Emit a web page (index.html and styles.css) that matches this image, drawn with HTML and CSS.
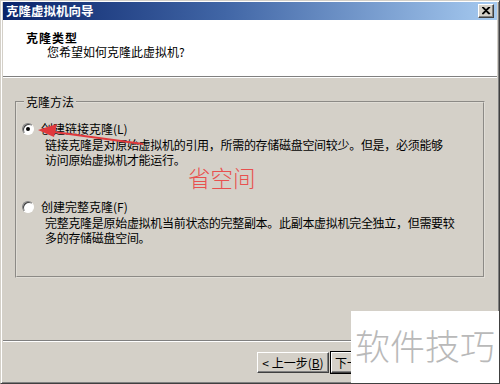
FILE: index.html
```html
<!doctype html>
<html lang="zh-CN">
  <head>
    <meta charset="UTF-8" />
    <title>克隆虚拟机向导</title>
    <link rel="stylesheet" href="styles.css">
  </head>
  <body>
    <div class="window">
      <div class="titlebar">
        <span class="title">克隆虚拟机向导</span>
        <span class="close-btn">
          <svg width="9" height="8" viewBox="0 0 9 8">
            <path d="M1 0 L8 7 M0 0 L7 7 M8 0 L1 7 M7 0 L0 7" stroke="#000" stroke-width="1.2" />
          </svg>
        </span>
      </div>
      <div class="header">
        <div class="header-title">克隆类型</div>
        <div class="header-sub">您希望如何克隆此虚拟机?</div>
      </div>
      <div class="content">
        <fieldset class="group">
          <legend>克隆方法</legend>
          <div class="option">
            <div class="option-label"><span class="radio checked"></span>创建链接克隆(L)</div>
            <div class="option-desc">链接克隆是对原始虚拟机的引用，所需的存储磁盘空间较少。但是，必须能够<br>访问原始虚拟机才能运行。</div>
          </div>
          <div class="option second">
            <div class="option-label"><span class="radio"></span>创建完整克隆(F)</div>
            <div class="option-desc">完整克隆是原始虚拟机当前状态的完整副本。此副本虚拟机完全独立，但需要较<br>多的存储磁盘空间。</div>
          </div>
        </fieldset>
      </div>
      <div class="footer">
        <button class="btn">&lt; 上一步(<u>B</u>)</button>
        <button class="btn default">下一</button>
      </div>

      <svg class="note-arrow" width="160" height="40" viewBox="0 0 160 40">
        <path d="M142 33 L46 20" stroke="#e0393c" stroke-width="2" fill="none" />
        <polygon points="37,19 56,13 53,26" fill="#e0393c" />
      </svg>
      <div class="note-text">省空间</div>
      <div class="watermark">软件技巧</div>
    </div>
  </body>
</html>
```

FILE: styles.css
```css
html, body {
  margin: 0;
  padding: 0;
  background: #d4d0c8;
}
body {
  font-family: "Noto Sans CJK SC", "Liberation Sans", sans-serif;
  font-size: 12px;
  color: #000;
}
.window {
  position: relative;
  width: 500px;
  height: 384px;
  box-sizing: border-box;
  display: flex;
  flex-direction: column;
  background: #d4d0c8;
  border-top: 1px solid #d4d0c8;
  border-left: 1px solid #d4d0c8;
  border-right: 1px solid #404040;
  border-bottom: 1px solid #404040;
  box-shadow: inset 1px 1px #fff, inset -1px -1px #808080;
  padding: 1px 2px 1px 1px;
  overflow: hidden;
}
.titlebar {
  height: 18px;
  margin-left: 1px;
  display: flex;
  align-items: center;
  justify-content: space-between;
  padding: 0 3px 0 3px;
  background: linear-gradient(to right, #0a246a 0%, #4166a6 45%, #a6caf0 100%);
}
.title {
  color: #fff;
  font-weight: bold;
  font-size: 12.5px;
  line-height: 18px;
}
.close-btn {
  width: 14px;
  height: 12px;
  display: flex;
  align-items: center;
  justify-content: center;
  background: #d4d0c8;
  border: 1px solid;
  border-color: #fff #404040 #404040 #fff;
  box-shadow: inset -1px -1px #808080;
}
.header {
  height: 57px;
  margin-left: 1px;
  background: #fff;
  padding: 10px 0 0 23px;
  box-sizing: border-box;
  border-bottom: 1px solid #808080;
}
.header-title {
  font-weight: bold;
  line-height: 15px;
  letter-spacing: 1px;
}
.header-sub {
  padding-left: 21px;
  line-height: 15px;
  margin-top: -1px;
}
.content {
  flex: 1;
  border-top: 1px solid #fff;
  margin-left: 1px;
  padding: 16px 12px 0 12px;
}
.group {
  margin: 0;
  height: 184px;
  box-sizing: border-box;
  border: 2px groove #e0ddd6;
  padding: 12px 0 0 5px;
}
.group legend {
  padding: 0 2px;
  margin-left: 2px;
  line-height: 15px;
}
.option-label {
  display: flex;
  align-items: center;
  line-height: 15px;
}
.option-desc {
  padding-left: 23px;
  line-height: 15px;
  margin-top: 1px;
  letter-spacing: -0.3px;
}
.option.second {
  margin-top: 32px;
}
.radio {
  width: 12px;
  height: 12px;
  box-sizing: border-box;
  border-radius: 50%;
  background: #fff;
  border: 1px solid;
  border-color: #808080 #fff #fff #808080;
  box-shadow: inset 1px 1px #404040;
  margin-right: 7px;
  display: flex;
  align-items: center;
  justify-content: center;
}
.radio.checked::after {
  content: "";
  width: 4px;
  height: 4px;
  border-radius: 50%;
  background: #000;
}
.footer {
  height: 42px;
  box-sizing: border-box;
  margin-left: 1px;
  border-top: 1px solid #808080;
  box-shadow: inset 0 1px #fff;
  display: flex;
  align-items: flex-start;
  padding: 11px 0 0 254px;
  gap: 2px;
}
.btn {
  width: 72px;
  height: 21px;
  padding: 0;
  font: inherit;
  font-size: 12px;
  background: #d4d0c8;
  border: 1px solid;
  border-color: #fff #404040 #404040 #fff;
  box-shadow: inset -1px -1px #808080;
  color: #000;
}
.btn.default {
  outline: 1px solid #000;
  text-align: left;
  padding-left: 3px;
}
.note-arrow {
  position: absolute;
  left: 0;
  top: 110px;
}
.note-text {
  position: absolute;
  left: 187px;
  top: 164px;
  font-size: 22.5px;
  line-height: 24px;
  color: #e8504f;
  font-weight: 300;
}
.watermark {
  position: absolute;
  left: 350px;
  top: 310px;
  width: 150px;
  height: 74px;
  background: #fff;
  box-sizing: border-box;
  padding: 14px 0 0 4px;
  font-size: 35px;
  line-height: 40px;
  color: #b9b9b9;
  font-weight: 300;
}
```
